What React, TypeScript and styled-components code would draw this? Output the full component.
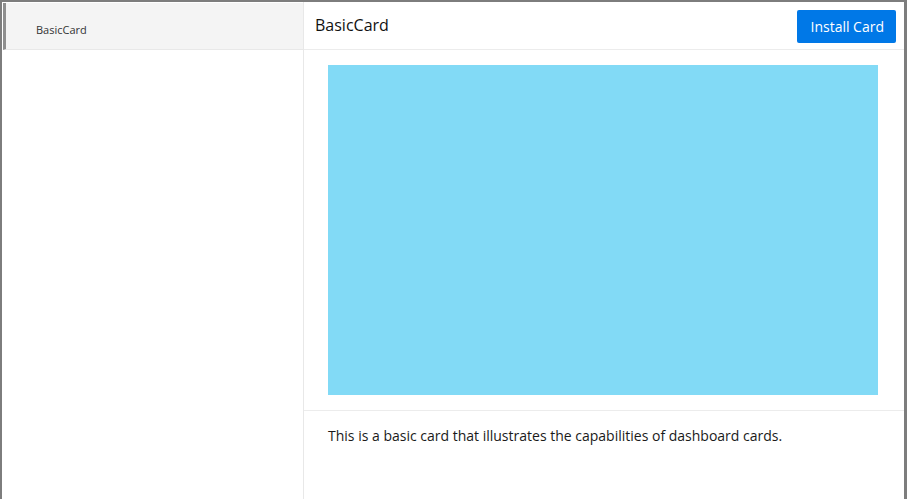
import React from "react";
import styled, { createGlobalStyle } from "styled-components";

const GlobalStyle = createGlobalStyle`
  html, body {
    margin: 0;
    padding: 0;
    background: #ffffff;
    font-family: "Open Sans", "Noto Sans", sans-serif;
  }
  * { box-sizing: border-box; }
`;

const Frame = styled.div`
  width: 907px;
  height: 499px;
  border-top: 2px solid #7d7d7d;
  border-left: 2px solid #7d7d7d;
  border-right: 3px solid #7d7d7d;
  display: flex;
  overflow: hidden;
  background: #fff;
`;

const Sidebar = styled.nav`
  width: 302px;
  flex: none;
  border-right: 1px solid #e8e8e8;
  padding: 1px 0 0 1px;
  display: flex;
  flex-direction: column;
`;

const SideItem = styled.div<{ $active?: boolean }>`
  height: 47px;
  display: flex;
  align-items: center;
  padding-left: 30px;
  padding-top: 7px;
  font-size: 11px;
  color: #333;
  background: ${(p) => (p.$active ? "#f4f4f4" : "transparent")};
  border-left: 3px solid ${(p) => (p.$active ? "#8f8f8f" : "transparent")};
  border-bottom: 1px solid #e8e8e8;
`;

const Main = styled.main`
  flex: 1;
  display: flex;
  flex-direction: column;
  min-width: 0;
`;

const Header = styled.header`
  height: 48px;
  flex: none;
  display: flex;
  align-items: center;
  justify-content: space-between;
  padding: 0 8px 0 11px;
  border-bottom: 1px solid #ececec;
`;

const Title = styled.h1`
  margin: 0;
  font-size: 16px;
  font-weight: 400;
  color: #111;
  padding-bottom: 2px;
`;

const InstallButton = styled.button`
  height: 33px;
  padding: 0 12px 0 13px;
  border: none;
  border-radius: 2px;
  background: #0078e7;
  color: #fff;
  font-family: "Open Sans", "Noto Sans", sans-serif;
  font-size: 14px;
  cursor: pointer;
  margin-top: 1px;
`;

const PreviewSection = styled.section`
  padding: 15px 24px 15px 24px;
  border-bottom: 1px solid #ececec;
`;

const Preview = styled.div`
  width: 550px;
  height: 330px;
  background: #82daf6;
`;

const Description = styled.p`
  margin: 0;
  padding: 15px 24px;
  font-size: 14px;
  line-height: 20px;
  color: #1a1a1a;
`;

export default function App() {
  return (
    <>
      <GlobalStyle />
      <Frame>
        <Sidebar>
          <SideItem $active>BasicCard</SideItem>
        </Sidebar>
        <Main>
          <Header>
            <Title>BasicCard</Title>
            <InstallButton>Install Card</InstallButton>
          </Header>
          <PreviewSection>
            <Preview />
          </PreviewSection>
          <Description>
            This is a basic card that illustrates the capabilities of dashboard cards.
          </Description>
        </Main>
      </Frame>
    </>
  );
}
